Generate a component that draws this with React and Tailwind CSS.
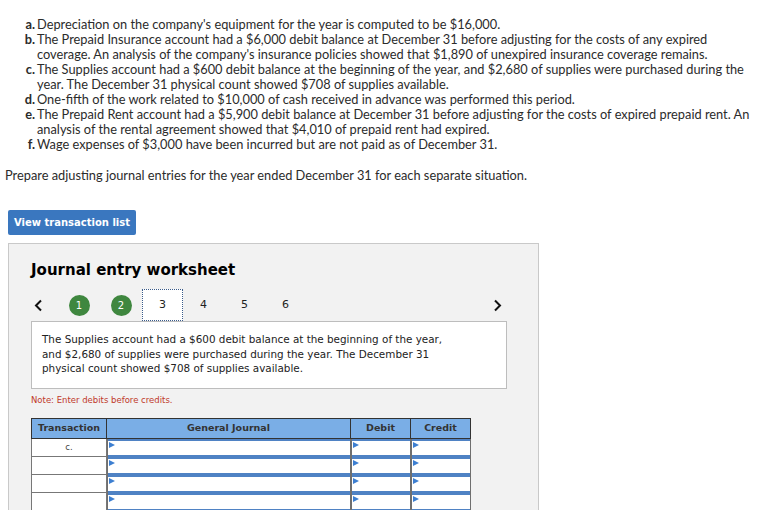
import React from "react";

const items = [
  ["a.", ["Depreciation on the company's equipment for the year is computed to be $16,000."]],
  ["b.", ["The Prepaid Insurance account had a $6,000 debit balance at December 31 before adjusting for the costs of any expired", "coverage. An analysis of the company's insurance policies showed that $1,890 of unexpired insurance coverage remains."]],
  ["c.", ["The Supplies account had a $600 debit balance at the beginning of the year, and $2,680 of supplies were purchased during the", "year. The December 31 physical count showed $708 of supplies available."]],
  ["d.", ["One-fifth of the work related to $10,000 of cash received in advance was performed this period."]],
  ["e.", ["The Prepaid Rent account had a $5,900 debit balance at December 31 before adjusting for the costs of expired prepaid rent. An", "analysis of the rental agreement showed that $4,010 of prepaid rent had expired."]],
  ["f.", ["Wage expenses of $3,000 have been incurred but are not paid as of December 31."]],
];

function Marker() {
  return (
    <svg width="6" height="6" viewBox="0 0 6 6" className="absolute left-[1px] top-[1px]">
      <path d="M0 0 L6 3 L0 6 Z" fill="#3d7fd1" />
    </svg>
  );
}

function InputCell({ w }) {
  return (
    <div className={`relative h-[18px] border-x border-x-[#6f6f6f] ${w}`}>
      <div className="relative h-full border-y-2 border-[#4f82c4] bg-white">
        <Marker />
      </div>
    </div>
  );
}

export default function App() {
  return (
    <div className="min-h-[510px] bg-white text-[#2b2b2b]">
      <div className="pt-[17px] font-[family-name:Lato,sans-serif] text-[12.8px] leading-[15px]">
        <div className="flex flex-col pl-[23px]">
          {items.map(([l, lines]) => (
            <div key={l} className="flex">
              <span className="w-[12px] text-right font-bold whitespace-nowrap">{l}</span>
              <div className="ml-[2px] flex flex-col">
                {lines.map((t, i) => (
                  <span key={i} className="whitespace-nowrap">{t}</span>
                ))}
              </div>
            </div>
          ))}
        </div>
        <p className="mt-[16px] pl-[5px] whitespace-nowrap">
          Prepare adjusting journal entries for the year ended December 31 for each separate situation.
        </p>
      </div>

      <div className="mt-[26px] pl-[8px] font-[family-name:DejaVu_Sans,sans-serif]">
        <button className="h-[25px] w-[128px] rounded-[2px] bg-[#3a77bf] font-[family-name:DejaVu_Sans,sans-serif] text-[10px] font-bold text-white">
          View transaction list
        </button>

        <div className="mt-[8px] h-[280px] w-[531px] border border-[#c9c9c9] bg-[#f2f2f2] pl-[22px] pt-[17px]">
          <h2 className="text-[15px] font-bold leading-[18px] text-black">Journal entry worksheet</h2>

          <div className="mt-[10px] flex h-[32px] w-[476px] items-center text-[11px] text-[#222]">
            <div className="flex w-[27px] items-center pl-[3px]">
              <svg width="9" height="13" viewBox="0 0 9 13"><path d="M7 1.5 L2 6.5 L7 11.5" stroke="#111" strokeWidth="2" fill="none" /></svg>
            </div>
            <div className="flex w-[42px] justify-center">
              <span className="flex h-[21px] w-[21px] items-center justify-center rounded-full bg-[#3f873f] text-[10px] text-white">1</span>
            </div>
            <div className="flex w-[42px] justify-center">
              <span className="flex h-[21px] w-[21px] items-center justify-center rounded-full bg-[#3f873f] text-[10px] text-white">2</span>
            </div>
            <div className="flex h-[32px] w-[41px] items-center justify-center border border-dotted border-[#3a5b8a] bg-white">3</div>
            <div className="flex w-[41px] justify-center">4</div>
            <div className="flex w-[41px] justify-center">5</div>
            <div className="flex w-[41px] justify-center">6</div>
            <div className="flex-1" />
            <div className="flex w-[14px] items-center">
              <svg width="9" height="13" viewBox="0 0 9 13"><path d="M2 1.5 L7 6.5 L2 11.5" stroke="#111" strokeWidth="2" fill="none" /></svg>
            </div>
          </div>

          <div className="h-[68px] w-[476px] border border-[#bdbdbd] bg-white pl-[10px] pt-[10px] text-[10.4px] leading-[14.5px] text-[#222]">
            <div>The Supplies account had a $600 debit balance at the beginning of the year,</div>
            <div>and $2,680 of supplies were purchased during the year. The December 31</div>
            <div>physical count showed $708 of supplies available.</div>
          </div>

          <p className="mt-[6px] text-[8.5px] leading-[10px] text-[#c0392b]">Note: Enter debits before credits.</p>

          <div className="mt-[13px] w-[440px]">
            <div className="flex h-[21px] border border-[#333] bg-[#7aaee6] text-[9.5px] font-bold text-[#333]">
              <div className="flex w-[75px] items-center justify-center border-r border-[#333]">Transaction</div>
              <div className="flex w-[244px] items-center justify-center border-r border-[#333]">General Journal</div>
              <div className="flex w-[60px] items-center justify-center border-r border-[#333]">Debit</div>
              <div className="flex flex-1 items-center justify-center">Credit</div>
            </div>
            {[0, 1, 2, 3].map((r) => (
              <div key={r} className="flex">
                <div className="flex h-[18px] w-[76px] items-center justify-center border-x border-b border-[#777] bg-white text-[8.5px] text-[#444]">
                  {r === 0 ? "c." : ""}
                </div>
                <InputCell w="w-[244px]" />
                <InputCell w="w-[60px]" />
                <InputCell w="w-[60px]" />
              </div>
            ))}
          </div>
        </div>
      </div>
    </div>
  );
}
